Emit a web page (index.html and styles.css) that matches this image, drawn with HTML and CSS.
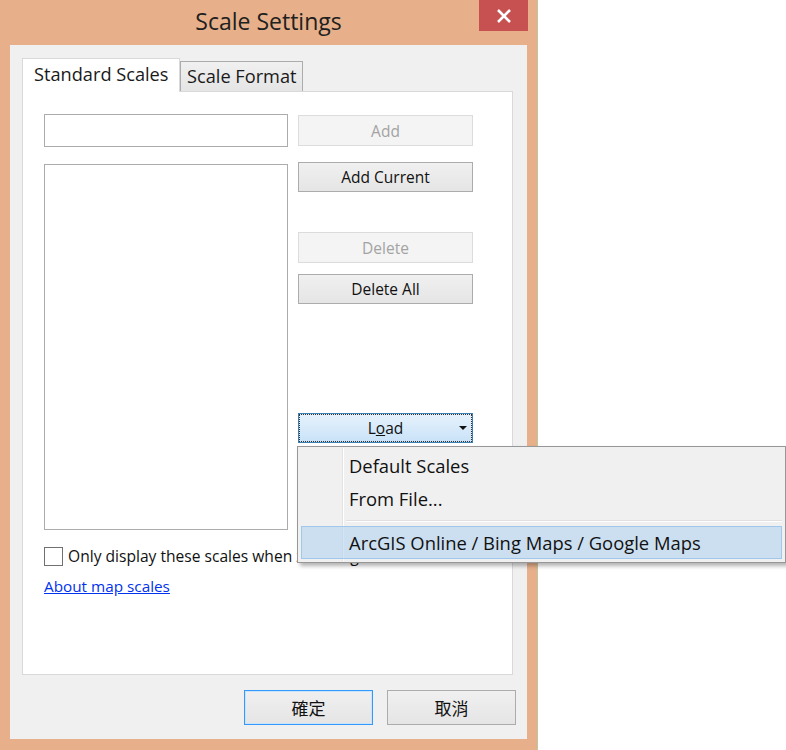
FILE: index.html
```html
<!DOCTYPE html>
<html>
<head>
<meta charset="utf-8">
<link rel="stylesheet" href="styles.css">
</head>
<body>
<div class="screen">
  <div class="window">
    <div class="titlebar">
      <div></div>
      <div class="title">Scale Settings</div>
      <div class="close-wrap">
        <div class="close">
          <svg width="16" height="16" viewBox="0 0 16 16"><path d="M2 2 L14 14 M14 2 L2 14" stroke="#fff" stroke-width="2.6" fill="none"/></svg>
        </div>
      </div>
    </div>
    <div class="client">
      <div class="tabs">
        <div class="tab active">Standard Scales</div>
        <div class="tab">Scale Format</div>
      </div>
      <div class="panel">
        <div class="grid">
          <div class="input"></div>
          <div class="btn disabled add">Add</div>
          <div class="list"></div>
          <div class="btncol">
            <div class="btn b-addcur">Add Current</div>
            <div class="btn disabled b-del">Delete</div>
            <div class="btn b-delall">Delete All</div>
            <div class="load-wrap">
              <div class="btn load"><span>L<u>o</u>ad</span><span class="arrow"></span></div>
              <div class="menu">
                <div class="gutter"></div>
                <div class="item">Default Scales</div>
                <div class="item">From File...</div>
                <div class="sep"></div>
                <div class="item hl">ArcGIS Online / Bing Maps / Google Maps</div>
              </div>
            </div>
          </div>
        </div>
        <div class="check-row">
          <span class="checkbox"></span>
          <span class="check-label">Only display these scales when zooming</span>
        </div>
        <a class="link" href="#">About map scales</a>
      </div>
      <div class="footer">
        <div class="btn big ok">確定</div>
        <div class="btn big">取消</div>
      </div>
    </div>
  </div>
</div>
</body>
</html>
```
FILE: styles.css
```css
html, body {
  margin: 0;
  padding: 0;
  background: #ffffff;
}
body {
  font-family: "Open Sans", "Noto Sans CJK TC", sans-serif;
  color: #1a1a1a;
}
.screen {
  width: 786px;
  height: 750px;
  overflow: hidden;
  background: #ffffff;
}
.window {
  width: 537px;
  height: 750px;
  background: #e7b08b;
  border-right: 1px solid #b9c9a0;
  display: flex;
  flex-direction: column;
}
.titlebar {
  height: 45px;
  display: grid;
  grid-template-columns: 1fr auto 1fr;
  align-items: start;
}
.title {
  font-size: 23px;
  line-height: 23px;
  padding-top: 10px;
  color: #202020;
}
.close-wrap {
  display: flex;
  justify-content: flex-end;
  padding-right: 9px;
}
.close {
  width: 49px;
  height: 31px;
  background: #c75050;
  display: flex;
  align-items: center;
  justify-content: center;
}
.client {
  margin-left: 10px;
  width: 517px;
  height: 694px;
  background: #f0f0f0;
  box-sizing: border-box;
  padding: 13px 0 0 12px;
  display: flex;
  flex-direction: column;
}
.tabs {
  display: flex;
  align-items: flex-end;
  height: 33px;
  position: relative;
  z-index: 2;
}
.tab {
  box-sizing: border-box;
  border: 1px solid #acacac;
  border-bottom: none;
  background: linear-gradient(#f0f0f0, #e5e5e5);
  font-size: 18.2px;
  height: 30px;
  line-height: 28px;
  padding: 0 5px 0 6px;
  color: #1a1a1a;
  white-space: nowrap;
}
.tab.active {
  background: #ffffff;
  border-color: #d9d9d9;
  height: 34px;
  margin-bottom: -1px;
  line-height: 30px;
  padding: 0 0 0 11px;
  width: 158px;
}
.panel {
  box-sizing: border-box;
  width: 491px;
  height: 584px;
  background: #ffffff;
  border: 1px solid #d9d9d9;
  padding: 22px 0 0 21px;
  position: relative;
  z-index: 1;
}
.grid {
  display: grid;
  grid-template-columns: 244px 175px;
  column-gap: 10px;
  align-items: start;
}
.input {
  box-sizing: border-box;
  height: 33px;
  border: 1px solid #acacac;
  background: #fff;
}
.btn {
  box-sizing: border-box;
  height: 31px;
  border: 1px solid #acacac;
  background: linear-gradient(#f0f0f0, #e5e5e5);
  font-size: 15.5px;
  display: flex;
  align-items: center;
  justify-content: center;
  color: #111;
}
.btn.disabled {
  background: #f4f4f4;
  border-color: #dcdcdc;
  color: #a3a3a3;
}
.add {
  margin-top: 1px;
}
.list {
  box-sizing: border-box;
  margin-top: 17px;
  height: 366px;
  border: 1px solid #acacac;
  background: #fff;
}
.btncol {
  display: flex;
  flex-direction: column;
  padding-top: 15px;
}
.b-addcur { height: 30px; }
.b-del { margin-top: 40px; }
.b-delall { margin-top: 11px; height: 30px; }
.load-wrap {
  margin-top: 109px;
  position: relative;
}
.btn.load {
  height: 30px;
  border: 1px solid #3c7fb1;
  outline: 1px dotted #333;
  outline-offset: -2px;
  background: linear-gradient(#e6f2fc, #c9e2f8);
  position: relative;
}
.arrow {
  position: absolute;
  right: 5px;
  top: 12px;
  width: 0;
  height: 0;
  border-left: 4px solid transparent;
  border-right: 4px solid transparent;
  border-top: 4px solid #111;
}
.menu {
  position: absolute;
  left: -1px;
  top: 33px;
  width: 489px;
  box-sizing: border-box;
  background: #f0f0f0;
  border: 1px solid #979797;
  box-shadow: 3px 3px 4px rgba(0,0,0,0.3);
  padding: 3px 3px 3px 3px;
  z-index: 10;
}
.gutter {
  position: absolute;
  left: 44px;
  top: 1px;
  bottom: 1px;
  width: 1px;
  background: #e2e3e3;
  border-right: 1px solid #ffffff;
}
.item {
  position: relative;
  height: 33px;
  line-height: 32px;
  font-size: 18.4px;
  padding-left: 48px;
  color: #111;
  box-sizing: border-box;
  white-space: nowrap;
}
.sep {
  margin: 4px 0 4px 45px;
  height: 1px;
  background: #e0e0e0;
  border-bottom: 1px solid #fff;
}
.item.hl {
  background: rgba(180, 212, 240, 0.6);
  border: 1px solid #a0c8ec;
  padding-left: 47px;
  line-height: 31px;
}
.check-row {
  display: flex;
  align-items: center;
  margin-top: 16px;
  height: 20px;
}
.checkbox {
  box-sizing: border-box;
  width: 19px;
  height: 19px;
  border: 1px solid #707070;
  background: #fff;
  margin-right: 5px;
}
.check-label {
  font-size: 15.6px;
  white-space: nowrap;
  color: #111;
}
.link {
  display: inline-block;
  margin-top: 10px;
  font-size: 15.3px;
  color: #0033ee;
  text-decoration: underline;
}
.footer {
  display: flex;
  justify-content: flex-end;
  gap: 14px;
  padding: 15px 11px 0 0;
}
.btn.big {
  width: 129px;
  height: 35px;
  font-size: 17px;
}
.btn.ok {
  border: 1px solid #3399ff;
  box-shadow: inset 0 0 0 1px #cce4f7;
}
```
